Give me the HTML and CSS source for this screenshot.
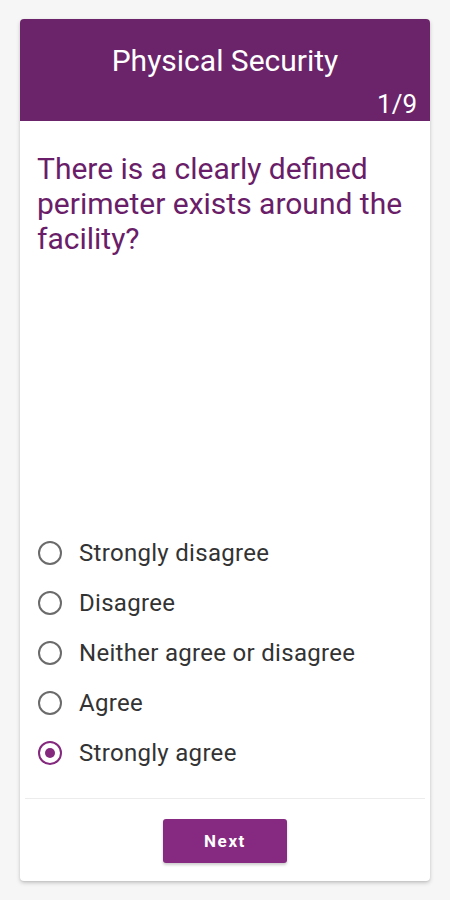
FILE: index.html
```html
<!DOCTYPE html>
<html>
<head>
<meta charset="utf-8">
<link rel="stylesheet" href="styles.css">
</head>
<body>
<div class="card">
  <div class="header">
    <div class="title">Physical Security</div>
    <div class="count">1/9</div>
  </div>
  <div class="body">
    <div class="question">There is a clearly defined perimeter exists around the facility?</div>
    <div class="options">
      <div class="option"><span class="radio"></span><span class="label">Strongly disagree</span></div>
      <div class="option"><span class="radio"></span><span class="label">Disagree</span></div>
      <div class="option"><span class="radio"></span><span class="label">Neither agree or disagree</span></div>
      <div class="option"><span class="radio"></span><span class="label">Agree</span></div>
      <div class="option"><span class="radio checked"></span><span class="label">Strongly agree</span></div>
    </div>
  </div>
  <div class="footer">
    <button class="next">Next</button>
  </div>
</div>
</body>
</html>
```
FILE: styles.css
```css
html, body {
  margin: 0;
  padding: 0;
  background: #f6f6f6;
  font-family: Roboto, "Noto Sans", sans-serif;
}
body {
  padding: 19px 20px;
}
.card {
  width: 410px;
  height: 862px;
  background: #fff;
  border-radius: 4px;
  box-shadow: 0 2px 4px rgba(0,0,0,0.18), 0 1px 2px rgba(0,0,0,0.08);
  display: flex;
  flex-direction: column;
  overflow: hidden;
}
.header {
  height: 102px;
  background: #6b246a;
  color: #fff;
  display: flex;
  flex-direction: column;
  box-sizing: border-box;
  padding: 23px 13px 0 0;
}
.title {
  text-align: center;
  font-size: 30px;
  line-height: 38px;
  padding-left: 13px;
}
.count {
  text-align: right;
  font-size: 26px;
  line-height: 30px;
  margin-top: 9px;
}
.body {
  flex: 1;
  display: flex;
  flex-direction: column;
  padding: 30px 14px 0 17px;
}
.question {
  color: #6a1d68;
  font-size: 30px;
  line-height: 35px;
}
.options {
  margin-top: auto;
  padding-bottom: 20px;
  border-bottom: 1px solid #ececec;
  margin-left: -12px;
  margin-right: -9px;
  padding-left: 12px;
}
.option {
  height: 50px;
  display: flex;
  align-items: center;
}
.radio {
  width: 20px;
  height: 20px;
  border: 2px solid #6b6b6b;
  border-radius: 50%;
  margin-left: 1px;
  margin-right: 17px;
  flex: none;
  display: flex;
  align-items: center;
  justify-content: center;
}
.radio.checked {
  border-color: #85297f;
}
.radio.checked::after {
  content: "";
  width: 10px;
  height: 10px;
  border-radius: 50%;
  background: #85297f;
}
.label {
  font-size: 24px;
  letter-spacing: 0.3px;
  color: #333;
}
.footer {
  display: flex;
  justify-content: center;
  padding: 20px 0 18px;
}
.next {
  width: 124px;
  height: 44px;
  border: none;
  border-radius: 3px;
  background: #852a80;
  color: #fff;
  font-family: Roboto, sans-serif;
  font-weight: 700;
  font-size: 17px;
  letter-spacing: 1.6px;
  box-shadow: 0 2px 3px rgba(0,0,0,0.2);
}
```
